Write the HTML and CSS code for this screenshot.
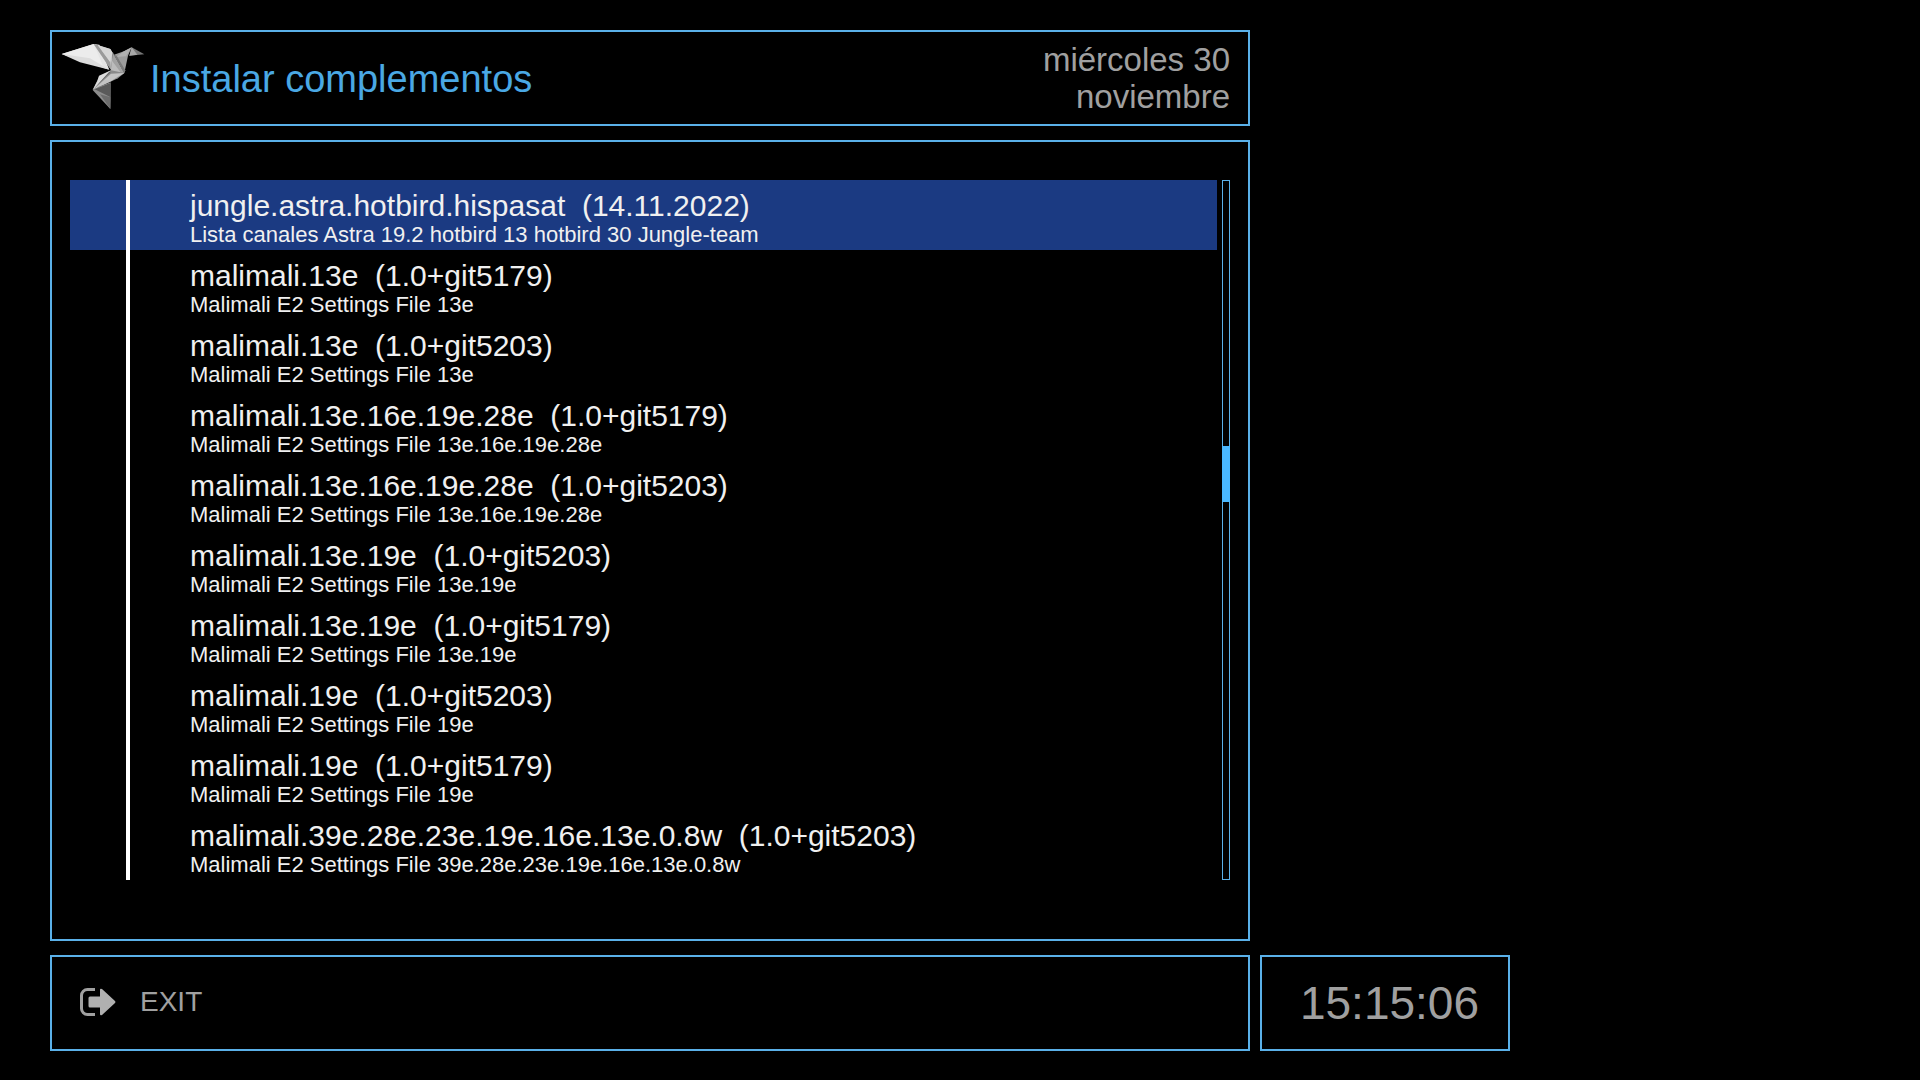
FILE: index.html
```html
<!DOCTYPE html>
<html lang="es">
<head>
    <meta charset="UTF-8">
    <meta name="viewport" content="width=device-width, initial-scale=1.0">
    <title>Instalar complementos</title>
    <link rel="stylesheet" href="styles.css">
</head>
<body>
    <div class="screen">
        <header class="panel header">
            <svg class="logo" viewBox="33 42 252 201" aria-hidden="true">
                <!-- wing -->
                <polygon fill="#e4e4e4" points="35,75 131,45 148,47 178,122"/>
                <polygon fill="#ececec" points="35,75 131,45 148,84 160,114"/>
                <polygon fill="#dcdcdc" points="35,75 120,88 178,122 90,100"/>
                <polygon fill="#c4c4c4" points="131,45 181,60 188,72 184,124"/>
                <polygon fill="#9a9a9a" points="131,45 143,48 180,98 183,122"/>
                <polygon fill="#d6d6d6" points="143,48 181,60 188,72 180,98"/>
                <!-- body and neck -->
                <polygon fill="#a2a2a2" points="188,68 192,77 223,132 176,160 183,124"/>
                <polygon fill="#bcbcbc" points="186,95 214,133 178,150 183,124"/>
                <polygon fill="#9c9c9c" points="192,77 222,67 245,55 234,80 223,132"/>
                <polygon fill="#b0b0b0" points="222,67 245,55 228,82 198,84"/>
                <polygon fill="#7a7a7a" points="192,77 200,80 226,124 223,132"/>
                <!-- head -->
                <polygon fill="#777" points="245,55 283,76 238,80"/>
                <polygon fill="#a8a8a8" points="245,55 262,77 238,80"/>
                <!-- lower body -->
                <polygon fill="#8a8a8a" points="183,124 223,132 204,148 128,183 147,144"/>
                <polygon fill="#dcdcdc" points="183,124 147,140 142,156 128,183"/>
                <polygon fill="#666" points="178,128 182,130 140,170 128,183"/>
                <polygon fill="#c4c4c4" points="183,134 223,132 180,158 128,183"/>
                <!-- tail -->
                <polygon fill="#8c8c8c" points="128,183 150,172 182,160 181,240"/>
                <polygon fill="#5a5a5a" points="134,181 182,162 182,205"/>
                <polygon fill="#6c6c6c" points="150,196 182,205 181,240"/>
            </svg>
            <h1 class="title">Instalar complementos</h1>
            <p class="date">miércoles 30 noviembre</p>
        </header>

        <main class="panel content">
            <ul class="plugin-list">
                <li class="plugin selected">
                    <div class="plugin-text">
                        <h2 class="name">jungle.astra.hotbird.hispasat  (14.11.2022)</h2>
                        <p class="description">Lista canales Astra 19.2 hotbird 13 hotbird 30 Jungle-team</p>
                    </div>
                </li>
                <li class="plugin">
                    <div class="plugin-text">
                        <h2 class="name">malimali.13e  (1.0+git5179)</h2>
                        <p class="description">Malimali E2 Settings File 13e</p>
                    </div>
                </li>
                <li class="plugin">
                    <div class="plugin-text">
                        <h2 class="name">malimali.13e  (1.0+git5203)</h2>
                        <p class="description">Malimali E2 Settings File 13e</p>
                    </div>
                </li>
                <li class="plugin">
                    <div class="plugin-text">
                        <h2 class="name">malimali.13e.16e.19e.28e  (1.0+git5179)</h2>
                        <p class="description">Malimali E2 Settings File 13e.16e.19e.28e</p>
                    </div>
                </li>
                <li class="plugin">
                    <div class="plugin-text">
                        <h2 class="name">malimali.13e.16e.19e.28e  (1.0+git5203)</h2>
                        <p class="description">Malimali E2 Settings File 13e.16e.19e.28e</p>
                    </div>
                </li>
                <li class="plugin">
                    <div class="plugin-text">
                        <h2 class="name">malimali.13e.19e  (1.0+git5203)</h2>
                        <p class="description">Malimali E2 Settings File 13e.19e</p>
                    </div>
                </li>
                <li class="plugin">
                    <div class="plugin-text">
                        <h2 class="name">malimali.13e.19e  (1.0+git5179)</h2>
                        <p class="description">Malimali E2 Settings File 13e.19e</p>
                    </div>
                </li>
                <li class="plugin">
                    <div class="plugin-text">
                        <h2 class="name">malimali.19e  (1.0+git5203)</h2>
                        <p class="description">Malimali E2 Settings File 19e</p>
                    </div>
                </li>
                <li class="plugin">
                    <div class="plugin-text">
                        <h2 class="name">malimali.19e  (1.0+git5179)</h2>
                        <p class="description">Malimali E2 Settings File 19e</p>
                    </div>
                </li>
                <li class="plugin">
                    <div class="plugin-text">
                        <h2 class="name">malimali.39e.28e.23e.19e.16e.13e.0.8w  (1.0+git5203)</h2>
                        <p class="description">Malimali E2 Settings File 39e.28e.23e.19e.16e.13e.0.8w</p>
                    </div>
                </li>
            </ul>
            <div class="scrollbar">
                <div class="thumb"></div>
            </div>
        </main>

        <footer class="panel footer">
            <button class="exit-btn" type="button">
                <svg class="exit-icon" viewBox="0 0 36 28" aria-hidden="true">
                    <path fill="none" stroke="#a0a0a0" stroke-width="3" d="M15 1.5H7.5a6 6 0 0 0-6 6v13a6 6 0 0 0 6 6H15"/>
                    <path fill="#b0b0b0" d="M10 8.500h10V2q0-2 2-1l13 12q1 1 0 2L22 27q-2 1-2-1v-6.500H10q-1.500 0-1.500-1.500v-8q0-1.500 1.500-1.500z"/>
                </svg>
                EXIT
            </button>
        </footer>

        <div class="panel clock">
            <time>15:15:06</time>
        </div>
    </div>
</body>
</html>
```
FILE: styles.css
```css
* {
    box-sizing: border-box;
}

body {
    margin: 0;
    background-color: #000;
    color: #f0f0f0;
    font-family: "Liberation Sans", Arial, sans-serif;
}

h1, h2, p, ul {
    margin: 0;
    padding: 0;
    font-weight: normal;
}

.screen {
    display: grid;
    grid-template-columns: 1fr 250px;
    grid-template-rows: 96px 1fr 96px;
    gap: 14px 10px;
    min-height: 100vh;
    padding: 30px 410px 29px 50px;
}

.panel {
    border: 2px solid #5ab0e8;
}

/* header */
.header {
    display: flex;
    align-items: center;
    padding: 0 18px 0 9px;
}

.logo {
    width: 84px;
    height: 67px;
    margin-bottom: 4px;
}

.title {
    flex: 1;
    margin-left: 5px;
    padding-top: 2px;
    color: #4aa8e4;
    font-size: 38px;
}

.date {
    width: 240px;
    color: #a0a0a0;
    font-size: 33px;
    line-height: 37px;
    text-align: right;
}

/* plugin list */
.content {
    grid-column: 1;
    display: flex;
    align-items: flex-start;
    gap: 5px;
    padding: 38px 18px 59px;
}

.plugin-list {
    flex: 1;
    list-style: none;
}

.plugin {
    padding-left: 56px;
}

.plugin.selected {
    background-color: #1b3a82;
}

.plugin-text {
    height: 70px;
    padding: 8px 0 0 60px;
    border-left: 4px solid #fff;
}

.name {
    font-size: 30px;
    line-height: 35px;
    white-space: pre;
}

.description {
    font-size: 22px;
    line-height: 23px;
}

.scrollbar {
    align-self: stretch;
    width: 8px;
    padding-top: 265px;
    border: 1px solid #5ab0e8;
}

.thumb {
    height: 56px;
    margin: 0 -1px;
    background-color: #4ab8ff;
}

/* bottom bar */
.footer {
    grid-column: 1;
    display: flex;
    align-items: center;
    padding: 0 28px 2px;
}

.exit-btn {
    display: flex;
    align-items: center;
    gap: 24px;
    padding: 0;
    border: none;
    background: none;
    color: #a0a0a0;
    font-family: inherit;
    font-size: 28px;
    cursor: pointer;
}

.exit-icon {
    width: 36px;
    height: 28px;
}

.clock {
    display: flex;
    align-items: center;
    justify-content: flex-end;
    padding-right: 29px;
    color: #a0a0a0;
    font-size: 46px;
}
```
